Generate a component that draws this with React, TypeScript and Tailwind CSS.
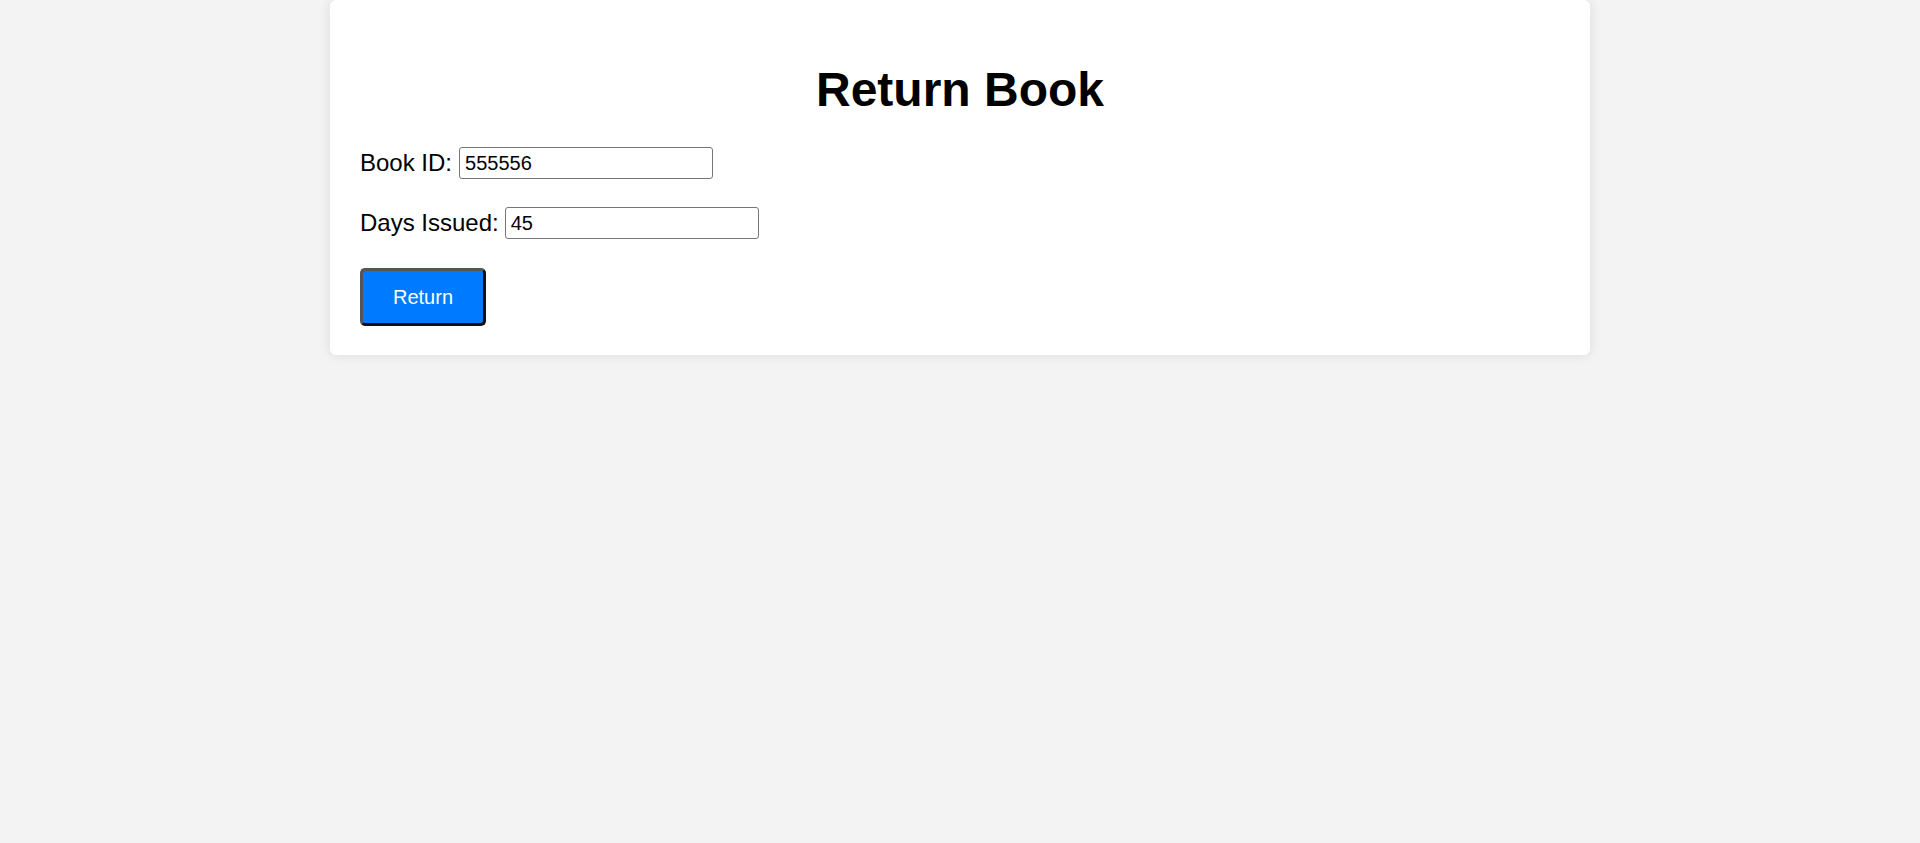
import { useState } from "react";

export default function App() {
  const [bookId, setBookId] = useState("555556");
  const [days, setDays] = useState("45");

  return (
    <div
      className="min-h-screen w-full bg-[#f3f3f3]"
      style={{ fontFamily: '"Liberation Sans", Arial, sans-serif' }}
    >
      <div className="mx-auto w-[1260px] rounded-[6px] bg-white px-[30px] pt-[30px] pb-[29px] shadow-[0_0_12px_rgba(0,0,0,0.1)]">
        <h1 className="mt-[32px] mb-[30px] text-center text-[48px] font-bold leading-[55px] text-black">
          Return Book
        </h1>

        <div className="flex h-[32px] items-center gap-[7px] text-[24px] text-black">
          <label htmlFor="bookId">Book ID:</label>
          <input
            id="bookId"
            type="text"
            value={bookId}
            onChange={(e) => setBookId(e.target.value)}
            className="h-[32px] w-[254px] rounded-[3px] border border-[#767676] px-[5px] text-[20px] text-black outline-none"
          />
        </div>

        <div className="mt-[28px] flex h-[32px] items-center gap-[6px] text-[24px] text-black">
          <label htmlFor="days">Days Issued:</label>
          <input
            id="days"
            type="text"
            value={days}
            onChange={(e) => setDays(e.target.value)}
            className="h-[32px] w-[254px] rounded-[3px] border border-[#767676] px-[5px] text-[20px] text-black outline-none"
          />
        </div>

        <button
          type="button"
          className="mt-[29px] flex h-[58px] w-[126px] items-center justify-center rounded-[5px] border-[3px] border-t-[#555555] border-l-[#555555] border-r-[#111111] border-b-[#111111] bg-[#007bff] text-[20px] text-white"
        >
          Return
        </button>
      </div>
    </div>
  );
}
